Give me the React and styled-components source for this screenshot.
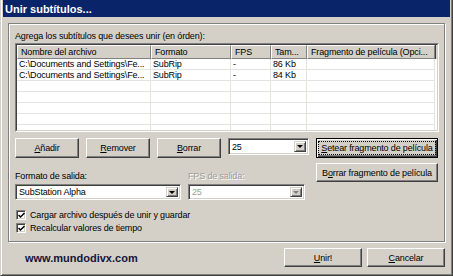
import React from "react";
import styled, { createGlobalStyle, css } from "styled-components";

const Global = createGlobalStyle`
  html, body {
    margin: 0;
    padding: 0;
    background: #d4d0c8;
  }
  * {
    box-sizing: border-box;
  }
`;

const FONT = `"Liberation Sans", Arial, sans-serif`;

const Window = styled.div`
  width: 453px;
  height: 276px;
  display: flex;
  flex-direction: column;
  background: #d4d0c8;
  border-left: 1px solid #d4d0c8;
  border-right: 1px solid #404040;
  border-bottom: 1px solid #404040;
  box-shadow: inset 1px 0 #fff, inset -1px -1px #808080;
  padding: 0 2px 2px 2px;
  font-family: ${FONT};
  font-size: 9px;
  letter-spacing: -0.15px;
  color: #000;
`;

const TitleBar = styled.div`
  height: 17px;
  flex: none;
  display: flex;
  align-items: center;
  padding-left: 2px;
  background: #0a246a;
  color: #fff;
  font-weight: bold;
  font-size: 11px;
  letter-spacing: 0;
`;

const Panel = styled.div`
  margin: 6px 5px 0 5px;
  height: 219px;
  flex: none;
  border: 1px solid #808080;
  box-shadow: 1px 1px 0 #fff, inset 1px 1px 0 #fff;
  padding: 6px 5px 0 6px;
  display: flex;
  flex-direction: column;
`;

const Caption = styled.div`
  height: 12px;
  line-height: 12px;
  margin-bottom: 1px;
`;

const ListOuter = styled.div`
  height: 89px;
  border: 1px solid;
  border-color: #808080 #fff #fff #808080;
`;

const ListInner = styled.div`
  height: 100%;
  border: 1px solid;
  border-color: #404040 #d4d0c8 #d4d0c8 #404040;
  background: #fff;
  overflow: hidden;
`;

const Header = styled.div`
  display: flex;
  height: 14px;
  background: #d4d0c8;
`;

const HeadCell = styled.div`
  width: ${(p) => p.$w}px;
  flex: none;
  height: 14px;
  line-height: 12px;
  padding-left: 3px;
  border: 1px solid;
  border-color: #fff #808080 #808080 #fff;
  box-shadow: 1px 0 0 #404040;
  white-space: nowrap;
  overflow: hidden;
`;

const Row = styled.div`
  display: flex;
  height: 11px;
`;

const Cell = styled.div`
  width: ${(p) => p.$w}px;
  flex: none;
  height: 11px;
  line-height: 10px;
  padding-left: 2px;
  border-right: 1px solid #e4e3e0;
  border-bottom: 1px solid #e4e3e0;
  white-space: nowrap;
  overflow: hidden;
`;

const Controls = styled.div`
  display: grid;
  grid-template-columns: 294px 122px;
  column-gap: 7px;
  margin-top: 6px;
`;

const LeftCol = styled.div`
  display: flex;
  flex-direction: column;
`;

const RightCol = styled.div`
  display: flex;
  flex-direction: column;
  gap: 5px;
`;

const ButtonRow = styled.div`
  display: flex;
  gap: 7px;
  align-items: flex-start;
`;

const Btn = styled.button`
  width: ${(p) => p.$w}px;
  height: ${(p) => p.$h || 20}px;
  padding: 0;
  font-family: ${FONT};
  font-size: 9px;
  letter-spacing: -0.15px;
  color: #000;
  background: #d4d0c8;
  border: 1px solid;
  border-color: #fff #404040 #404040 #fff;
  box-shadow: inset -1px -1px #808080;
  display: flex;
  align-items: center;
  justify-content: center;
  ${(p) =>
    p.$focused &&
    css`
      border-color: #000;
      box-shadow: inset 1px 1px #fff, inset -1px -1px #404040,
        inset -2px -2px #808080;
    `}
`;

const FocusRing = styled.span`
  outline: 1px dotted #000;
  padding: 1px 2px;
  line-height: 10px;
`;

const Key = styled.span`
  text-decoration: underline;
`;

const Fields = styled.div`
  display: flex;
  gap: 7px;
  margin-top: 13px;
`;

const Field = styled.div`
  display: flex;
  flex-direction: column;
  gap: 2px;
  color: ${(p) => (p.$disabled ? "#a09c94" : "#000")};
`;

const FieldLabel = styled.div`
  height: 11px;
  line-height: 11px;
  ${(p) =>
    p.$disabled &&
    css`
      text-shadow: 1px 1px 0 #fff;
    `}
`;

const Combo = styled.div`
  width: ${(p) => p.$w}px;
  height: ${(p) => p.$h || 16}px;
  display: flex;
  align-items: center;
  background: #fff;
  border: 1px solid;
  border-color: #808080 #fff #fff #808080;
  box-shadow: inset 1px 1px #404040, inset -1px -1px #d4d0c8;
  padding: 2px 2px 2px 3px;
  color: ${(p) => (p.$disabled ? "#a09c94" : "#000")};
`;

const ComboText = styled.span`
  flex: 1;
  line-height: 10px;
  white-space: nowrap;
`;

const DropBtn = styled.span`
  width: 12px;
  align-self: stretch;
  flex: none;
  display: flex;
  align-items: center;
  justify-content: center;
  background: #d4d0c8;
  border: 1px solid;
  border-color: #d4d0c8 #404040 #404040 #d4d0c8;
  box-shadow: inset 1px 1px #fff, inset -1px -1px #808080;
`;

const Arrow = styled.span`
  width: 0;
  height: 0;
  border-left: 3px solid transparent;
  border-right: 3px solid transparent;
  border-top: 3px solid ${(p) => (p.$disabled ? "#808080" : "#000")};
`;

const Checks = styled.div`
  display: flex;
  flex-direction: column;
  gap: 3px;
  margin-top: 10px;
  padding-left: 1px;
`;

const CheckRow = styled.label`
  display: flex;
  align-items: center;
  gap: 4px;
  height: 10px;
  line-height: 10px;
`;

const Box = styled.span`
  width: 10px;
  height: 10px;
  flex: none;
  background: #fff;
  border: 1px solid;
  border-color: #808080 #fff #fff #808080;
  box-shadow: inset 1px 1px #404040, inset -1px -1px #d4d0c8;
  display: flex;
  align-items: center;
  justify-content: center;
`;

const Footer = styled.div`
  display: flex;
  align-items: center;
  margin: 6px 5px 0 0;
`;

const Site = styled.div`
  flex: 1;
  padding-left: 22px;
  font-size: 11px;
  font-weight: bold;
  letter-spacing: 0;
  color: #14143a;
`;

const FooterBtns = styled.div`
  display: flex;
  gap: 5px;
`;

const columns = [134, 80, 40, 36, 128];

const files = [
  ["C:\\Documents and Settings\\Fe...", "SubRip", "-", "86 Kb", ""],
  ["C:\\Documents and Settings\\Fe...", "SubRip", "-", "84 Kb", ""],
];

function Dropdown({ value, w, h, disabled }) {
  return (
    <Combo $w={w} $h={h} $disabled={disabled}>
      <ComboText>{value}</ComboText>
      <DropBtn>
        <Arrow $disabled={disabled} />
      </DropBtn>
    </Combo>
  );
}

function Check({ children }) {
  return (
    <CheckRow>
      <Box>
        <svg width="7" height="7" viewBox="0 0 7 7">
          <path d="M0.5 3 L2.5 5 L6.5 1" stroke="#000" strokeWidth="1.5" fill="none" />
        </svg>
      </Box>
      {children}
    </CheckRow>
  );
}

export default function App() {
  const rows = [...files, ...Array(5).fill(["", "", "", "", ""])];
  return (
    <>
      <Global />
      <Window>
        <TitleBar>Unir subtítulos...</TitleBar>
        <Panel>
          <Caption>Agrega los subtítulos que desees unir (en órden):</Caption>
          <ListOuter>
            <ListInner>
              <Header>
                <HeadCell $w={columns[0]}>Nombre del archivo</HeadCell>
                <HeadCell $w={columns[1]}>Formato</HeadCell>
                <HeadCell $w={columns[2]}>FPS</HeadCell>
                <HeadCell $w={columns[3]}>Tam...</HeadCell>
                <HeadCell $w={columns[4]}>Fragmento de película (Opci...</HeadCell>
              </Header>
              {rows.map((r, i) => (
                <Row key={i}>
                  {r.map((c, j) => (
                    <Cell key={j} $w={columns[j]}>
                      {c}
                    </Cell>
                  ))}
                </Row>
              ))}
            </ListInner>
          </ListOuter>
          <Controls>
            <LeftCol>
              <ButtonRow>
                <Btn $w={64}>
                  <span>
                    <Key>A</Key>ñadir
                  </span>
                </Btn>
                <Btn $w={64}>
                  <span>
                    <Key>R</Key>emover
                  </span>
                </Btn>
                <Btn $w={64}>
                  <span>
                    <Key>B</Key>orrar
                  </span>
                </Btn>
                <Dropdown value="25" w={81} h={17} />
              </ButtonRow>
              <Fields>
                <Field>
                  <FieldLabel>Formato de salida:</FieldLabel>
                  <Dropdown value="SubStation Alpha" w={166} />
                </Field>
                <Field $disabled>
                  <FieldLabel $disabled>FPS de salida:</FieldLabel>
                  <Dropdown value="25" w={117} disabled />
                </Field>
              </Fields>
            </LeftCol>
            <RightCol>
              <Btn $w={122} $focused>
                <FocusRing>
                  <Key>S</Key>etear fragmento de película
                </FocusRing>
              </Btn>
              <Btn $w={122} $h={19}>
                <span>
                  B<Key>o</Key>rrar fragmento de película
                </span>
              </Btn>
            </RightCol>
          </Controls>
          <Checks>
            <Check>Cargar archivo después de unir y guardar</Check>
            <Check>Recalcular valores de tiempo</Check>
          </Checks>
        </Panel>
        <Footer>
          <Site>www.mundodivx.com</Site>
          <FooterBtns>
            <Btn $w={78} $h={19}>
              <span>
                <Key>U</Key>nir!
              </span>
            </Btn>
            <Btn $w={78} $h={19}>
              <span>
                <Key>C</Key>ancelar
              </span>
            </Btn>
          </FooterBtns>
        </Footer>
      </Window>
    </>
  );
}
